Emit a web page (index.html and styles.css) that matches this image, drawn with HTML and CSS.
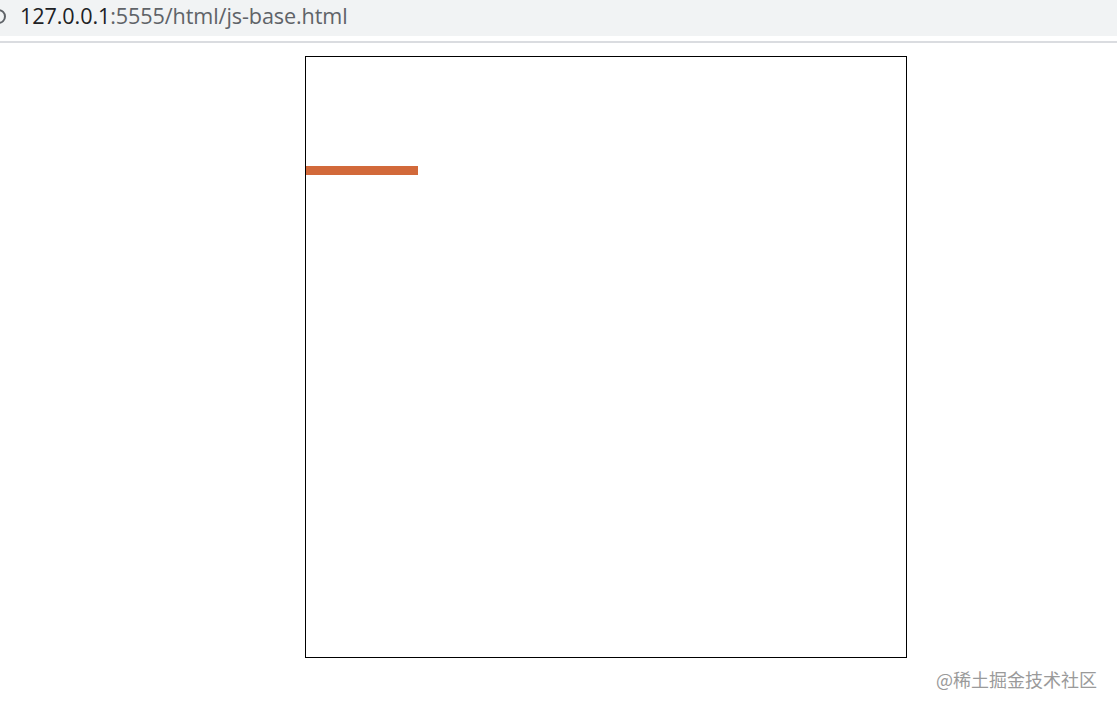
FILE: index.html
```html
<!DOCTYPE html>
<html lang="zh">
<head>
<meta charset="utf-8">
<title>js-base</title>
<link rel="stylesheet" href="styles.css">
</head>
<body>
  <header class="addressbar">
    <div class="bar">
      <span class="info-icon"></span>
      <span class="url"><span class="host">127.0.0.1</span><span class="path">:5555/html/js-base.html</span></span>
    </div>
    <div class="divider"></div>
  </header>
  <main class="page">
    <div class="canvas">
      <div class="paddle"></div>
    </div>
  </main>
  <div class="watermark">@稀土掘金技术社区</div>
</body>
</html>
```

FILE: styles.css
```css
html, body {
  margin: 0;
  padding: 0;
  background: #ffffff;
}
body {
  width: 1117px;
  height: 710px;
  overflow: hidden;
  position: relative;
  font-family: "Open Sans", "Noto Sans", sans-serif;
}
.addressbar {
  display: flex;
  flex-direction: column;
}
.bar {
  height: 36px;
  background: #f1f3f4;
  display: flex;
  align-items: center;
  position: relative;
}
.info-icon {
  position: absolute;
  left: -9px;
  top: 9px;
  width: 11px;
  height: 11px;
  border: 2px solid #5f6368;
  border-radius: 50%;
}
.url {
  margin-left: 20px;
  font-size: 21.6px;
  letter-spacing: -0.1px;
  line-height: 1;
  padding-bottom: 5px;
}
.host { color: #202124; }
.path { color: #5f6368; }
.divider {
  margin-top: 5px;
  height: 2px;
  background: #dadce0;
}
.page {
  padding-top: 13px;
  padding-left: 305px;
}
.canvas {
  width: 600px;
  height: 600px;
  border: 1px solid #000000;
}
.paddle {
  margin-top: 109px;
  width: 112px;
  height: 9px;
  background: #d2693a;
}
.watermark {
  position: absolute;
  right: 20px;
  top: 667px;
  font-size: 18px;
  color: #9a9a9a;
  font-family: "Noto Sans CJK SC", "Noto Sans", sans-serif;
  line-height: 24px;
}
```
